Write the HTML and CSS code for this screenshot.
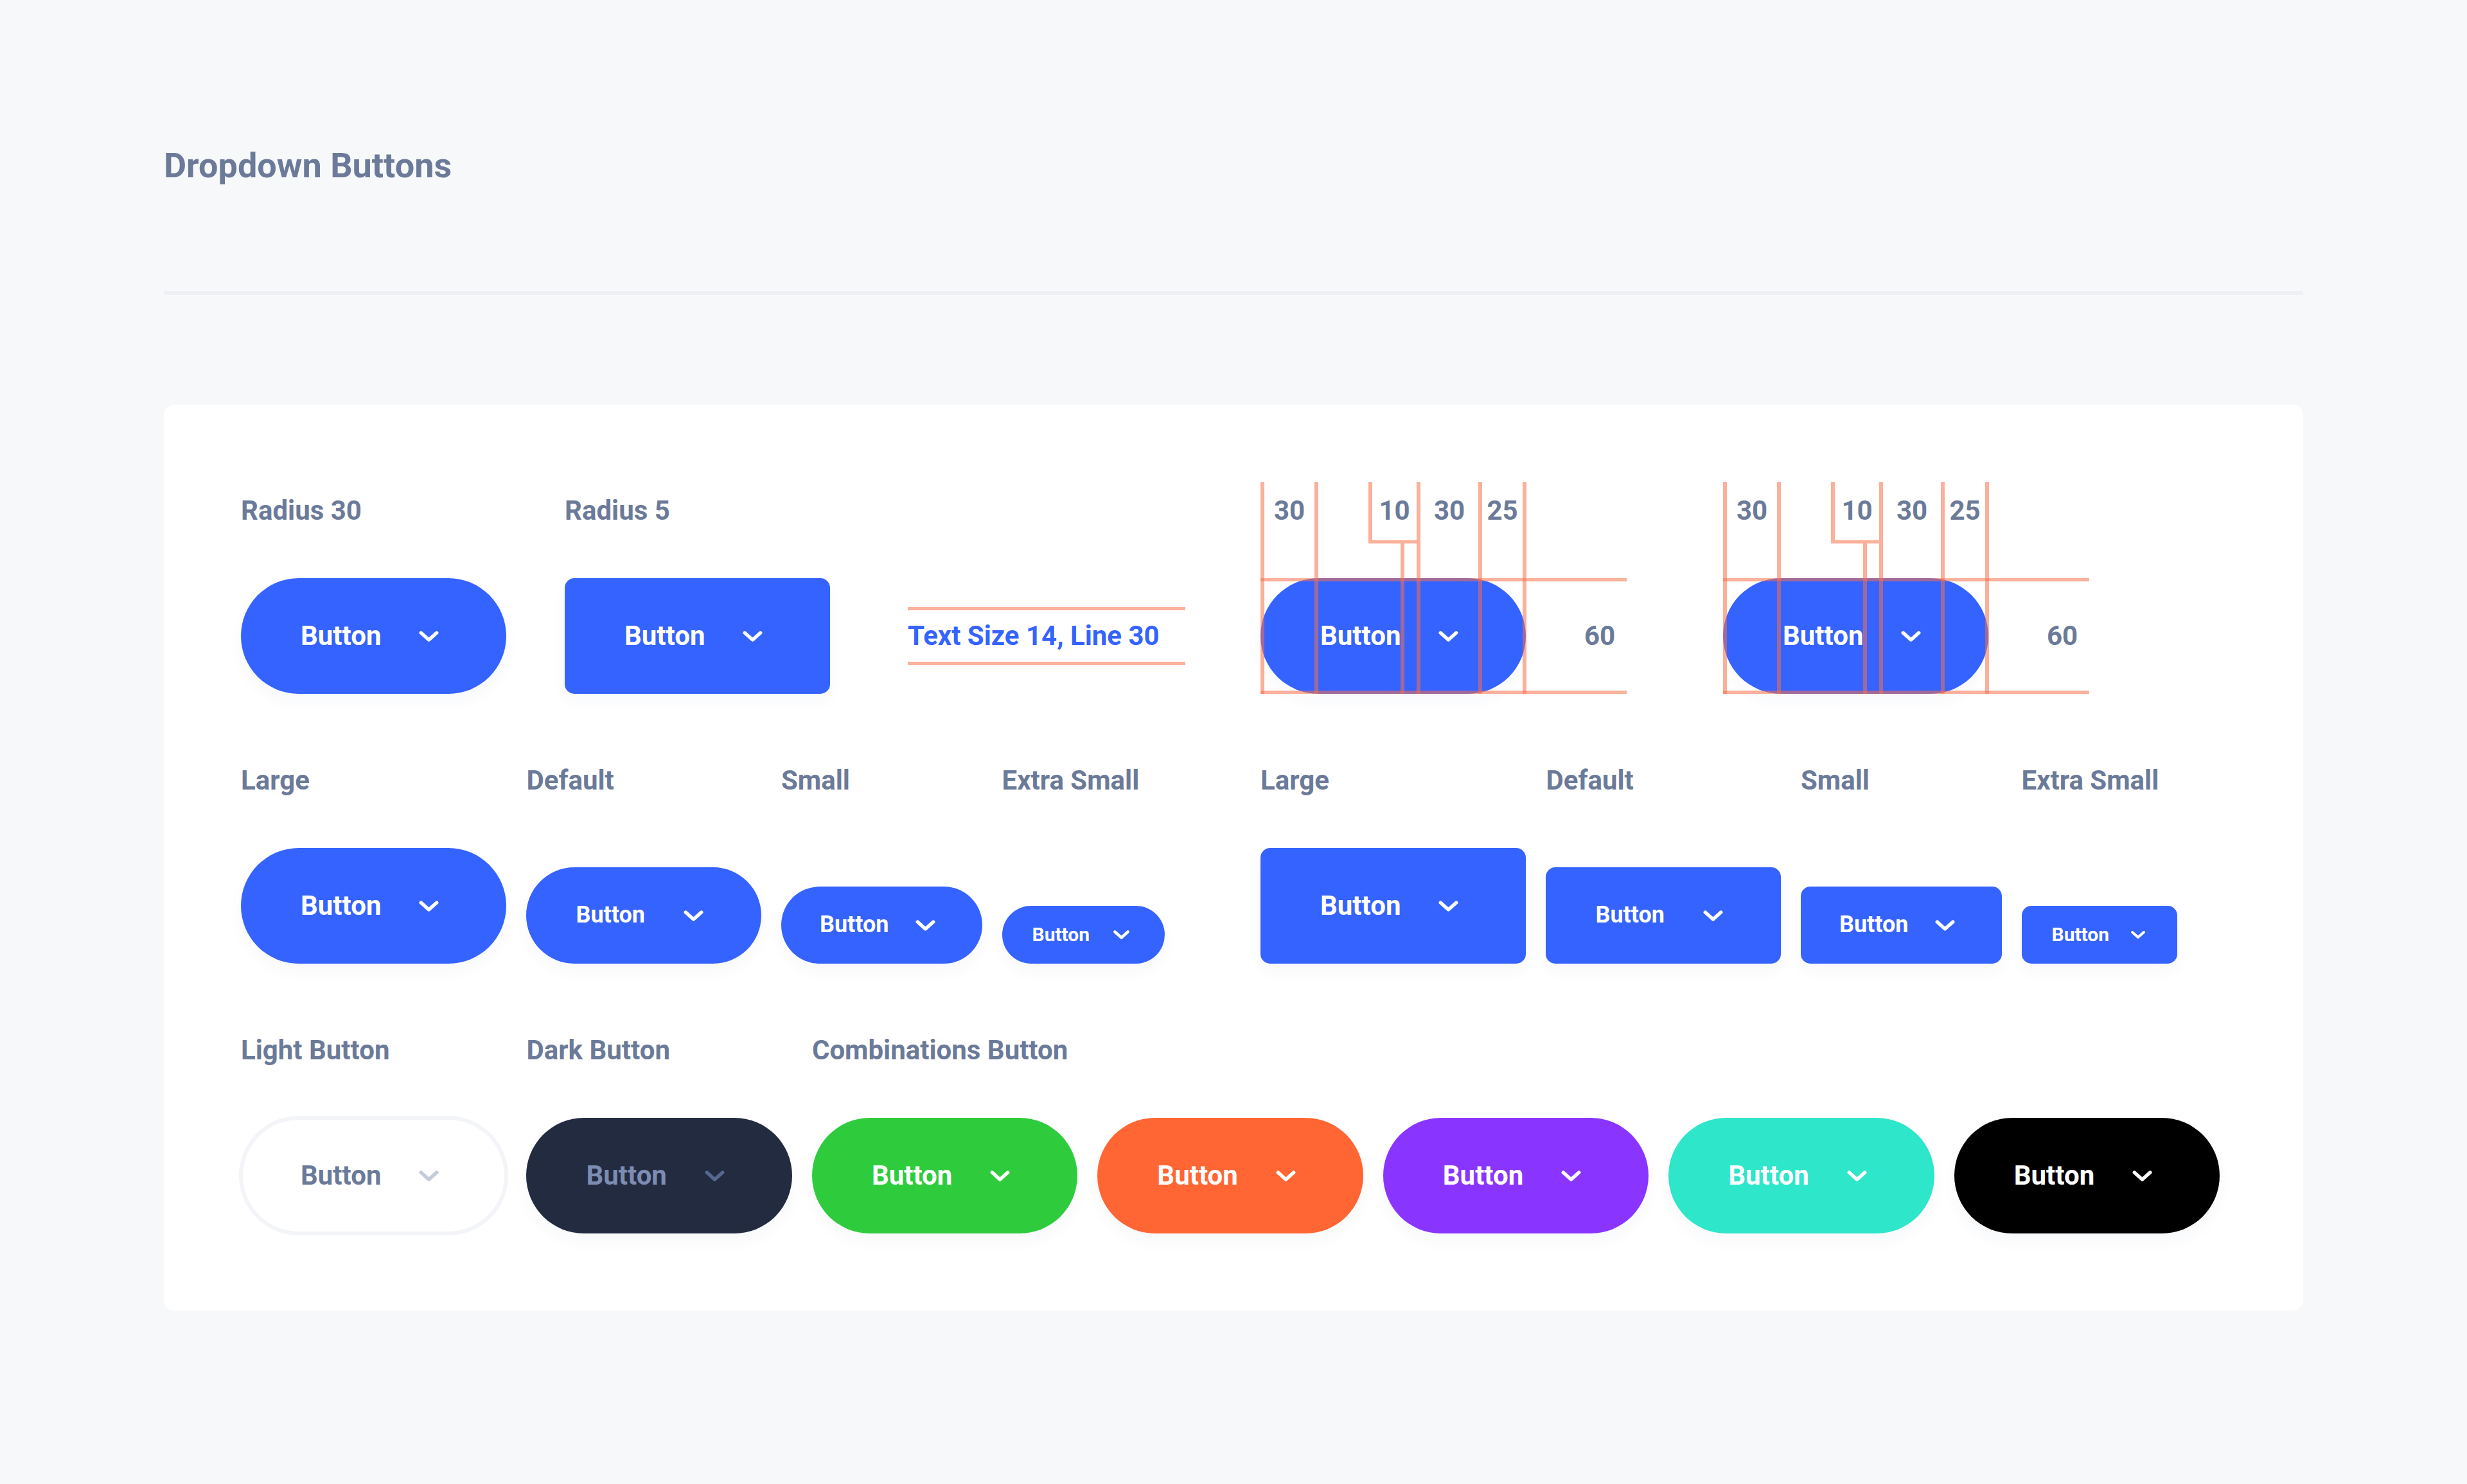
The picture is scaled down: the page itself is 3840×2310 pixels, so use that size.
FILE: index.html
```html
<!DOCTYPE html>
<html lang="en">
<head>
<meta charset="utf-8">
<title>Dropdown Buttons</title>
<link rel="stylesheet" href="styles.css">
</head>
<body>
<div class="page">
  <h1 class="title">Dropdown Buttons</h1>
  <div class="divider"></div>
  <div class="card">
    <!-- Row 1 -->
    <div class="row">
      <div class="col col-r30">
        <div class="label">Radius 30</div>
        <div class="slot">
          <button class="btn lg pill blue"><span class="btn-text">Button</span><svg class="chev" viewBox="0 0 24 14"><path d="M3 3 L12 11 L21 3"/></svg></button>
        </div>
      </div>
      <div class="col col-r5">
        <div class="label">Radius 5</div>
        <div class="slot">
          <button class="btn lg rect blue"><span class="btn-text">Button</span><svg class="chev" viewBox="0 0 24 14"><path d="M3 3 L12 11 L21 3"/></svg></button>
        </div>
      </div>
      <div class="col col-spec">
        <div class="spec">Text Size 14, Line 30</div>
      </div>
      <div class="diagram">
        <button class="btn lg pill blue"><span class="btn-text">Button</span><svg class="chev" viewBox="0 0 24 14"><path d="M3 3 L12 11 L21 3"/></svg></button>
        <span class="ln v v1"></span>
        <span class="ln v v2"></span>
        <span class="ln v v3"></span>
        <span class="ln h hbox"></span>
        <span class="ln v v4"></span>
        <span class="ln v v5"></span>
        <span class="ln v v6"></span>
        <span class="ln v v7"></span>
        <span class="ln h htop"></span>
        <span class="ln h hbot"></span>
        <span class="dim d1">30</span>
        <span class="dim d2">10</span>
        <span class="dim d3">30</span>
        <span class="dim d4">25</span>
        <span class="dim d60">60</span>
      </div>
      <div class="diagram">
        <button class="btn lg pill blue"><span class="btn-text">Button</span><svg class="chev" viewBox="0 0 24 14"><path d="M3 3 L12 11 L21 3"/></svg></button>
        <span class="ln v v1"></span>
        <span class="ln v v2"></span>
        <span class="ln v v3"></span>
        <span class="ln h hbox"></span>
        <span class="ln v v4"></span>
        <span class="ln v v5"></span>
        <span class="ln v v6"></span>
        <span class="ln v v7"></span>
        <span class="ln h htop"></span>
        <span class="ln h hbot"></span>
        <span class="dim d1">30</span>
        <span class="dim d2">10</span>
        <span class="dim d3">30</span>
        <span class="dim d4">25</span>
        <span class="dim d60">60</span>
      </div>
    </div>

    <!-- Row 2 -->
    <div class="row row-gap">
      <div class="group group-first">
        <div class="col">
          <div class="label">Large</div>
          <div class="slot"><button class="btn lg pill blue"><span class="btn-text">Button</span><svg class="chev" viewBox="0 0 24 14"><path d="M3 3 L12 11 L21 3"/></svg></button></div>
        </div>
        <div class="col">
          <div class="label">Default</div>
          <div class="slot"><button class="btn md pill blue"><span class="btn-text">Button</span><svg class="chev" viewBox="0 0 24 14"><path d="M3 3 L12 11 L21 3"/></svg></button></div>
        </div>
        <div class="col">
          <div class="label">Small</div>
          <div class="slot"><button class="btn sm pill blue"><span class="btn-text">Button</span><svg class="chev" viewBox="0 0 24 14"><path d="M3 3 L12 11 L21 3"/></svg></button></div>
        </div>
        <div class="col">
          <div class="label">Extra Small</div>
          <div class="slot"><button class="btn xs pill blue"><span class="btn-text">Button</span><svg class="chev" viewBox="0 0 24 14"><path d="M3 3 L12 11 L21 3"/></svg></button></div>
        </div>
      </div>
      <div class="group">
        <div class="col">
          <div class="label">Large</div>
          <div class="slot"><button class="btn lg rect blue"><span class="btn-text">Button</span><svg class="chev" viewBox="0 0 24 14"><path d="M3 3 L12 11 L21 3"/></svg></button></div>
        </div>
        <div class="col">
          <div class="label">Default</div>
          <div class="slot"><button class="btn md rect blue"><span class="btn-text">Button</span><svg class="chev" viewBox="0 0 24 14"><path d="M3 3 L12 11 L21 3"/></svg></button></div>
        </div>
        <div class="col">
          <div class="label">Small</div>
          <div class="slot"><button class="btn sm rect blue"><span class="btn-text">Button</span><svg class="chev" viewBox="0 0 24 14"><path d="M3 3 L12 11 L21 3"/></svg></button></div>
        </div>
        <div class="col">
          <div class="label">Extra Small</div>
          <div class="slot"><button class="btn xs rect blue"><span class="btn-text">Button</span><svg class="chev" viewBox="0 0 24 14"><path d="M3 3 L12 11 L21 3"/></svg></button></div>
        </div>
      </div>
    </div>

    <!-- Row 3 -->
    <div class="row row-gap row-3">
      <div class="col">
        <div class="label">Light Button</div>
        <div class="slot"><button class="btn lg pill light"><span class="btn-text">Button</span><svg class="chev" viewBox="0 0 24 14"><path d="M3 3 L12 11 L21 3"/></svg></button></div>
      </div>
      <div class="col">
        <div class="label">Dark Button</div>
        <div class="slot"><button class="btn lg pill dark"><span class="btn-text">Button</span><svg class="chev" viewBox="0 0 24 14"><path d="M3 3 L12 11 L21 3"/></svg></button></div>
      </div>
      <div class="col">
        <div class="label">Combinations Button</div>
        <div class="slot combos">
          <button class="btn lg pill green"><span class="btn-text">Button</span><svg class="chev" viewBox="0 0 24 14"><path d="M3 3 L12 11 L21 3"/></svg></button>
          <button class="btn lg pill orange"><span class="btn-text">Button</span><svg class="chev" viewBox="0 0 24 14"><path d="M3 3 L12 11 L21 3"/></svg></button>
          <button class="btn lg pill purple"><span class="btn-text">Button</span><svg class="chev" viewBox="0 0 24 14"><path d="M3 3 L12 11 L21 3"/></svg></button>
          <button class="btn lg pill teal"><span class="btn-text">Button</span><svg class="chev" viewBox="0 0 24 14"><path d="M3 3 L12 11 L21 3"/></svg></button>
          <button class="btn lg pill black"><span class="btn-text">Button</span><svg class="chev" viewBox="0 0 24 14"><path d="M3 3 L12 11 L21 3"/></svg></button>
        </div>
      </div>
    </div>
  </div>
</div>
</body>
</html>
```

FILE: styles.css
```css
* { box-sizing: border-box; }

html, body {
  margin: 0;
  padding: 0;
  background: #f7f8fa;
}

body {
  font-family: Roboto, "Noto Sans", "Liberation Sans", sans-serif;
  color: #6b7a99;
}

.page {
  width: 3330px;
  margin: 0 auto;
  padding-top: 225px;
  padding-bottom: 270px;
}

.title {
  margin: 0;
  font-size: 54px;
  line-height: 66px;
  font-weight: 700;
  color: #6b7a99;
}

.divider {
  margin-top: 162px;
  height: 6px;
  background: #eef0f4;
  border-radius: 3px;
}

.card {
  margin-top: 171px;
  background: #ffffff;
  border-radius: 16px;
  padding: 120px;
}

.row {
  display: flex;
  align-items: flex-start;
}

.row-gap {
  margin-top: 90px;
}

.col {
  display: flex;
  flex-direction: column;
  flex: none;
}

.col-r30 { width: 504px; }
.col-r5 { width: 534px; }
.col-spec { width: 549px; }

.label {
  font-size: 42px;
  line-height: 90px;
  font-weight: 700;
  color: #6b7a99;
  white-space: nowrap;
}

.slot {
  margin-top: 60px;
  height: 180px;
  display: flex;
  align-items: flex-end;
}

.group {
  display: flex;
  gap: 31px;
  flex: none;
}

.group-first { width: 1587px; }

.row-3 { gap: 31px; }

.combos { gap: 31px; }

/* spec text */
.spec {
  margin-top: 195px;
  width: 432px;
  height: 90px;
  border-top: 5px solid #fbb19a;
  border-bottom: 5px solid #fbb19a;
  font-size: 42px;
  line-height: 80px;
  font-weight: 700;
  color: #3563ff;
  white-space: nowrap;
}

/* buttons */
.btn {
  display: inline-flex;
  align-items: center;
  flex: none;
  border: 0;
  margin: 0;
  font-family: Roboto, "Noto Sans", "Liberation Sans", sans-serif;
  font-weight: 700;
  color: #ffffff;
  box-shadow: 0 12px 24px rgba(40, 60, 110, 0.035);
  cursor: pointer;
}

.btn-text {
  line-height: 1.2;
  white-space: nowrap;
}

.chev {
  display: block;
  flex: none;
}

.chev path {
  fill: none;
  stroke: currentColor;
  stroke-width: 4;
  stroke-linecap: round;
  stroke-linejoin: round;
}

.lg {
  height: 180px;
  font-size: 42px;
  padding: 0 104px 0 93px;
}
.lg .chev { width: 33px; height: 19px; margin-left: 58px; }

.md {
  height: 150px;
  font-size: 36px;
  padding: 0 89px 0 77px;
}
.md .chev { width: 33px; height: 19px; margin-left: 59px; }

.sm {
  height: 120px;
  font-size: 36px;
  padding: 0 72px 0 60px;
}
.sm .chev { width: 33px; height: 19px; margin-left: 40px; }

.xs {
  height: 90px;
  font-size: 30px;
  padding: 0 54px 0 47px;
}
.xs .chev { width: 27px; height: 16px; margin-left: 36px; }

.rect.xs { padding: 0 49px 0 47px; }
.rect.xs .chev { width: 24px; height: 14px; margin-left: 33px; }

.pill { border-radius: 999px; }
.rect { border-radius: 15px; }

.blue { background: #3563ff; }
.green { background: #2ecc3d; }
.orange { background: #ff6633; }
.purple { background: #8a35ff; }
.teal { background: #2ee6c9; }
.black { background: #000000; }

.light {
  background: #ffffff;
  color: #6b7a99;
  box-shadow: 0 0 0 3px #f2f4f7, inset 0 0 0 3px #f2f4f7;
}
.light .chev { color: #c3cad9; }

.dark {
  background: #222b40;
  color: #7d8cb3;
}
.dark .chev { color: #56688f; }

/* annotated diagram */
.diagram {
  position: relative;
  width: 720px;
  height: 330px;
  padding-top: 150px;
  flex: none;
}

.ln {
  position: absolute;
  background: rgba(247, 112, 72, 0.55);
}
.ln.v { width: 6px; top: 0; height: 330px; }
.ln.h { height: 5px; }

.v1 { left: 0; }
.v2 { left: 84px; }
.v3 { left: 168px; height: 96px !important; }
.v4 { left: 218px; top: 96px !important; height: 234px !important; }
.v5 { left: 243px; }
.v6 { left: 339px; }
.v7 { left: 408px; }
.hbox { left: 174px; top: 91px; width: 69px; }
.htop { left: 0; top: 150px; width: 570px; }
.hbot { left: 0; top: 325px; width: 570px; }

.dim {
  position: absolute;
  top: 0;
  font-size: 42px;
  line-height: 90px;
  font-weight: 700;
  color: #6b7a99;
  text-align: center;
}
.d1 { left: 6px; width: 78px; }
.d2 { left: 174px; width: 69px; }
.d3 { left: 249px; width: 90px; }
.d4 { left: 345px; width: 63px; }
.d60 { left: 504px; top: 150px; line-height: 180px; }
```
